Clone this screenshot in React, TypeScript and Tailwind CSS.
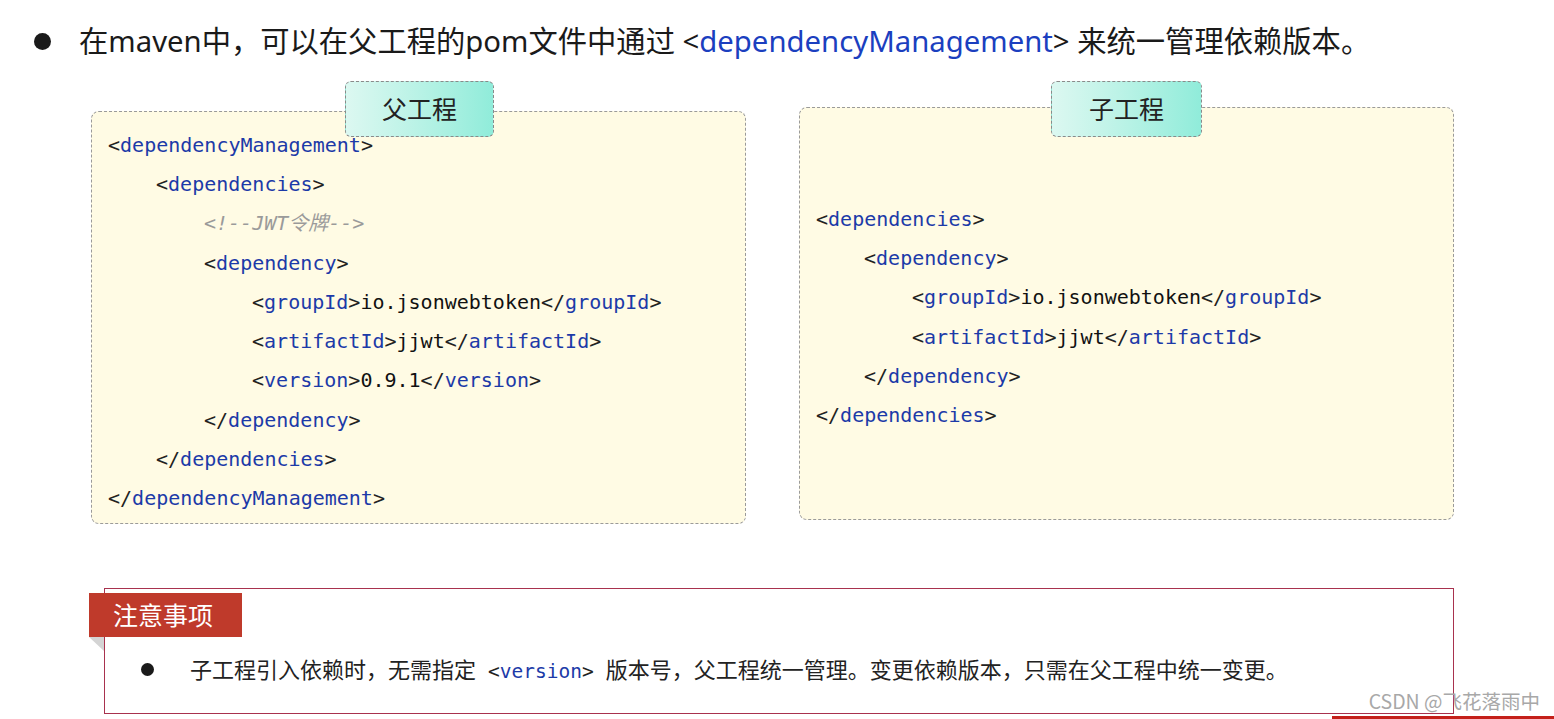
import React from "react";

const ui = { fontFamily: '"Noto Sans", "Noto Sans CJK SC", sans-serif' };
const cjk = { fontFamily: '"Noto Sans CJK SC", "Noto Sans", sans-serif' };
const mono = { fontFamily: '"DejaVu Sans Mono", "Noto Sans CJK SC", monospace' };

function Tag({ name, close }: { name: string; close?: boolean }) {
  return (
    <>
      <span className="text-[#222]">{close ? "</" : "<"}</span>
      <span className="text-[#1c3aa8]">{name}</span>
      <span className="text-[#222]">{">"}</span>
    </>
  );
}

function Line({ indent, children }: { indent: number; children: React.ReactNode }) {
  return (
    <div className="h-[39.3px] flex items-center whitespace-pre" style={{ paddingLeft: indent * 48 }}>
      {children}
    </div>
  );
}

function Elem({ indent, name, value }: { indent: number; name: string; value: string }) {
  return (
    <Line indent={indent}>
      <Tag name={name} />
      <span className="text-[#111]">{value}</span>
      <Tag name={name} close />
    </Line>
  );
}

function TabLabel({ text, className }: { text: string; className: string }) {
  return (
    <div
      className={`absolute h-[56px] flex items-center justify-center rounded-[6px] border border-dashed border-[#8a8a8a] bg-gradient-to-r from-[#dcf8f1] to-[#90ecda] text-[25px] text-[#222] ${className}`}
      style={cjk}
    >
      {text}
    </div>
  );
}

export default function App() {
  return (
    <div className="w-[1554px] h-[719px] bg-white relative overflow-hidden text-[#1a1a1a]">
      {/* heading */}
      <div className="flex items-center pl-[34px] pt-[22px] h-[60px]" style={ui}>
        <span className="w-[17px] h-[17px] rounded-full bg-[#1a1a1a] mr-[28px]" />
        <span className="text-[29.3px] leading-[38px] whitespace-nowrap">
          在maven中，可以在父工程的pom文件中通过 &lt;<span className="text-[#1b3fbf]">dependencyManagement</span>&gt; 来统一管理依赖版本。
        </span>
      </div>

      {/* code boxes */}
      <div className="flex items-start pl-[91px] gap-[53px] mt-[47px]">
        <div className="relative mt-[4px] w-[655px] h-[413px] rounded-[8px] border border-dashed border-[#9a9a9a] bg-[#fffbe4] pl-[16px] pt-[13px] text-[20px]" style={mono}>
          <TabLabel text="父工程" className="left-[253px] top-[-31px] w-[149px]" />
          <Line indent={0}><Tag name="dependencyManagement" /></Line>
          <Line indent={1}><Tag name="dependencies" /></Line>
          <Line indent={2}>
            <span className="text-[#9a9a9a] italic">{"<!--JWT令牌-->"}</span>
          </Line>
          <Line indent={2}><Tag name="dependency" /></Line>
          <Elem indent={3} name="groupId" value="io.jsonwebtoken" />
          <Elem indent={3} name="artifactId" value="jjwt" />
          <Elem indent={3} name="version" value="0.9.1" />
          <Line indent={2}><Tag name="dependency" close /></Line>
          <Line indent={1}><Tag name="dependencies" close /></Line>
          <Line indent={0}><Tag name="dependencyManagement" close /></Line>
        </div>

        <div className="relative w-[655px] h-[413px] rounded-[8px] border border-dashed border-[#9a9a9a] bg-[#fffbe4] pl-[16px] pt-[91px] text-[20px]" style={mono}>
          <TabLabel text="子工程" className="left-[251px] top-[-27px] w-[151px]" />
          <Line indent={0}><Tag name="dependencies" /></Line>
          <Line indent={1}><Tag name="dependency" /></Line>
          <Elem indent={2} name="groupId" value="io.jsonwebtoken" />
          <Elem indent={2} name="artifactId" value="jjwt" />
          <Line indent={1}><Tag name="dependency" close /></Line>
          <Line indent={0}><Tag name="dependencies" close /></Line>
        </div>
      </div>

      {/* notice */}
      <div className="relative ml-[104px] mt-[64px] w-[1350px] h-[126px] border border-[#a8324e]" style={cjk}>
        <div className="absolute left-[-16px] top-[4px] w-[153px] h-[44px] bg-[#bf3a2b] text-white text-[25px] flex items-center pl-[24px]">
          注意事项
        </div>
        <div className="absolute left-[-16px] top-[48px] w-0 h-0 border-l-[15px] border-l-transparent border-t-[14px] border-t-[#d4d4d4]" />
        <div className="flex items-center pt-[65px] pl-[36px] h-[95px]">
          <span className="w-[13px] h-[13px] rounded-full bg-[#1a1a1a] mr-[36px]" />
          <span className="text-[22px] text-[#222] whitespace-pre">
            子工程引入依赖时，无需指定<span className="text-[19.5px] mx-[12px]" style={mono}>&lt;<span className="text-[#1c3aa8]">version</span>&gt;</span>版本号，父工程统一管理。变更依赖版本，只需在父工程中统一变更。
          </span>
        </div>
      </div>

      {/* watermark and next-slide edge */}
      <div className="absolute right-[14px] top-[686px] text-[19.5px] text-[#a8a8a8]" style={cjk}>
        CSDN @飞花落雨中
      </div>
      <div className="absolute left-[1332px] right-0 top-[716px] h-[3px] bg-[#c4201a]" />
    </div>
  );
}
